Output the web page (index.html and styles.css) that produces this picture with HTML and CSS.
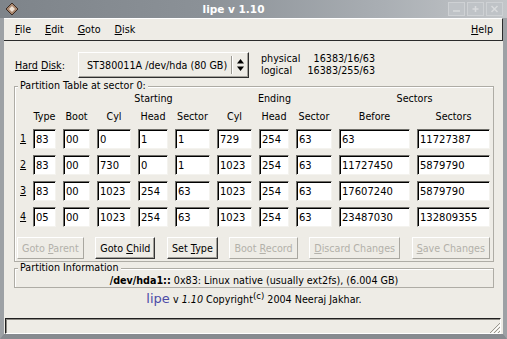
FILE: index.html
```html
<!DOCTYPE html>
<html lang="en">
<head>
    <meta charset="UTF-8">
    <meta name="viewport" content="width=device-width, initial-scale=1.0">
    <title>lipe v 1.10</title>
    <link rel="stylesheet" href="styles.css">
</head>
<body>
<div class="window">
    <div class="titlebar">
        <svg class="app-icon" width="14" height="14" viewBox="0 0 14 14">
            <path d="M7 1 L13 7 L7 13 L1 7 Z" fill="#a8866e" stroke="#3b2b22" stroke-width="1"/>
            <path d="M7 4 L10 7 L7 10 L4 7 Z" fill="#efe2d4"/>
        </svg>
        <span class="title">lipe v 1.10</span>
        <div class="wm-buttons">
            <span class="wm-btn"><svg width="11" height="8" viewBox="0 0 11 8"><path d="M2 6 H9" stroke="#d9dbdd" stroke-width="1.5"/></svg></span>
            <span class="wm-btn"><svg width="11" height="8" viewBox="0 0 11 8"><path d="M5.5 1 V7 M2.5 4 H8.5" stroke="#d9dbdd" stroke-width="1.5"/></svg></span>
            <span class="wm-btn"><svg width="11" height="8" viewBox="0 0 11 8"><path d="M2.5 1 L8.5 7 M8.5 1 L2.5 7" stroke="#d9dbdd" stroke-width="1.5"/></svg></span>
        </div>
    </div>

    <div class="frame-body">
        <div class="menubar">
            <span class="menu"><u>F</u>ile</span>
            <span class="menu"><u>E</u>dit</span>
            <span class="menu"><u>G</u>oto</span>
            <span class="menu"><u>D</u>isk</span>
            <span class="menu help"><u>H</u>elp</span>
        </div>

        <div class="content">
            <div class="disk-row">
                <label class="disk-label"><u>Hard</u> <u>Disk</u>:</label>
                <div class="combo">
                    <span class="combo-text">ST380011A /dev/hda (80 GB)</span>
                    <span class="combo-sep"></span>
                    <svg class="spin" width="9" height="16" viewBox="0 0 9 16">
                        <path d="M4.5 2 L8 6.5 H1 Z" fill="#000"/>
                        <path d="M4.5 14 L8 9.5 H1 Z" fill="#000"/>
                    </svg>
                </div>
                <div class="geometry">
                    <span>physical</span><span class="num">16383/16/63</span>
                    <span>logical</span><span class="num">16383/255/63</span>
                </div>
            </div>

            <fieldset class="frame ptable">
                <legend>Partition Table at sector 0:</legend>
                <div class="grid">
                    <div class="group span3"></div>
                    <div class="group span3">Starting</div>
                    <div class="group span3">Ending</div>
                    <div class="group span2">Sectors</div>

                    <div></div>
                    <div class="hd">Type</div>
                    <div class="hd">Boot</div>
                    <div class="hd">Cyl</div>
                    <div class="hd">Head</div>
                    <div class="hd">Sector</div>
                    <div class="hd">Cyl</div>
                    <div class="hd">Head</div>
                    <div class="hd">Sector</div>
                    <div class="hd">Before</div>
                    <div class="hd">Sectors</div>

                    <div class="rownum"><u>1</u></div>
                    <input class="campo" type="text" value="83">
                    <input class="campo" type="text" value="00">
                    <input class="campo" type="text" value="0">
                    <input class="campo" type="text" value="1">
                    <input class="campo" type="text" value="1">
                    <input class="campo" type="text" value="729">
                    <input class="campo" type="text" value="254">
                    <input class="campo" type="text" value="63">
                    <input class="campo" type="text" value="63">
                    <input class="campo" type="text" value="11727387">

                    <div class="rownum"><u>2</u></div>
                    <input class="campo" type="text" value="83">
                    <input class="campo" type="text" value="00">
                    <input class="campo" type="text" value="730">
                    <input class="campo" type="text" value="0">
                    <input class="campo" type="text" value="1">
                    <input class="campo" type="text" value="1023">
                    <input class="campo" type="text" value="254">
                    <input class="campo" type="text" value="63">
                    <input class="campo" type="text" value="11727450">
                    <input class="campo" type="text" value="5879790">

                    <div class="rownum"><u>3</u></div>
                    <input class="campo" type="text" value="83">
                    <input class="campo" type="text" value="00">
                    <input class="campo" type="text" value="1023">
                    <input class="campo" type="text" value="254">
                    <input class="campo" type="text" value="63">
                    <input class="campo" type="text" value="1023">
                    <input class="campo" type="text" value="254">
                    <input class="campo" type="text" value="63">
                    <input class="campo" type="text" value="17607240">
                    <input class="campo" type="text" value="5879790">

                    <div class="rownum"><u>4</u></div>
                    <input class="campo" type="text" value="05">
                    <input class="campo" type="text" value="00">
                    <input class="campo" type="text" value="1023">
                    <input class="campo" type="text" value="254">
                    <input class="campo" type="text" value="63">
                    <input class="campo" type="text" value="1023">
                    <input class="campo" type="text" value="254">
                    <input class="campo" type="text" value="63">
                    <input class="campo" type="text" value="23487030">
                    <input class="campo" type="text" value="132809355">
                </div>

                <div class="actions">
                    <button class="btn" type="button" disabled>Goto <u>P</u>arent</button>
                    <button class="btn" type="button">Goto <u>C</u>hild</button>
                    <button class="btn" type="button">Set <u>T</u>ype</button>
                    <button class="btn" type="button" disabled>Boot <u>R</u>ecord</button>
                    <button class="btn" type="button" disabled><u>D</u>iscard Changes</button>
                    <button class="btn" type="button" disabled><u>S</u>ave Changes</button>
                </div>
            </fieldset>

            <fieldset class="frame pinfo">
                <legend>Partition Information</legend>
                <p class="info"><b>/dev/hda1::</b> 0x83: Linux native (usually ext2fs), (6.004 GB)</p>
            </fieldset>

            <p class="about"><span class="logo">lipe</span> v <i>1.10</i> Copyright<sup>(c)</sup> 2004 Neeraj Jakhar.</p>
        </div>

        <div class="statusbar">
            <svg class="grip" width="13" height="13" viewBox="0 0 13 13">
                <path d="M12 2 L2 12 M12 6 L6 12 M12 10 L10 12" stroke="#9a9890" stroke-width="1"/>
                <path d="M13 3 L3 13 M13 7 L7 13" stroke="#fff" stroke-width="1"/>
            </svg>
        </div>
    </div>
</div>
</body>
</html>
```

FILE: styles.css
```css
* {
    box-sizing: border-box;
}

body {
    margin: 0;
    font-family: "DejaVu Sans", sans-serif;
    font-size: 9.6px;
    color: #000;
    background: #9da1a5;
}

.window {
    width: 507px;
    height: 339px;
    display: flex;
    flex-direction: column;
    background: #eeece6;
}

/* title bar */
.titlebar {
    height: 18px;
    display: flex;
    align-items: center;
    padding: 0 4px 0 5px;
    background: linear-gradient(90deg, #7e848a 0%, #8b9197 40%, #a9aeb3 75%, #c3c6c9 100%);
}

.app-icon {
    flex: none;
}

.title {
    flex: 1;
    text-align: center;
    color: #fff;
    font-weight: bold;
    font-size: 10.5px;
}

.wm-buttons {
    display: flex;
    gap: 2px;
}

.wm-btn {
    width: 17px;
    height: 14px;
    display: flex;
    align-items: center;
    justify-content: center;
    border: 1px solid #ced1d4;
    background: #bfc3c7;
}

/* body frame */
.frame-body {
    flex: 1;
    display: flex;
    flex-direction: column;
    border-left: 4px solid #9da1a5;
    border-right: 4px solid #9da1a5;
    border-bottom: 5px solid #878b90;
    background: #eeece6;
}

.menubar {
    height: 23px;
    display: flex;
    align-items: center;
    padding: 0 2px 0 4px;
    border-top: 1px solid #fff;
    border-bottom: 1px solid #2b2b2b;
    border-right: 1px solid #2b2b2b;
}

.menu {
    padding: 0 7px;
}

.help {
    margin-left: auto;
}

.content {
    padding-left: 10px;
}

/* hard disk row */
.disk-row {
    display: flex;
    align-items: center;
    height: 26px;
    margin-top: 11px;
}

.disk-label {
    flex: 0 0 63px;
    margin-left: 1px;
}

.combo {
    width: 171px;
    height: 26px;
    display: flex;
    align-items: center;
    border: 1px solid;
    border-color: #fff #2e2e2e #2e2e2e #fff;
    box-shadow: inset -1px -1px 0 #a4a29b;
    font-size: 9.6px;
}

.combo-text {
    flex: 1;
    min-width: 0;
    padding-left: 8px;
    white-space: nowrap;
}

.combo-sep {
    flex: none;
    width: 2px;
    height: 18px;
    border-left: 1px solid #9c9a93;
    border-right: 1px solid #fff;
}

.spin {
    flex: none;
    margin: 0 3px 0 3px;
}

.geometry {
    display: grid;
    grid-template-columns: 40px 74px;
    line-height: 12px;
    margin-left: 12px;
}

.num {
    text-align: right;
}

/* frames */
.frame {
    margin: 0;
    width: 480px;
    border: 1px solid #aeaca5;
    box-shadow: inset 1px 1px 0 #fff;
}

.frame legend {
    padding: 0 2px;
    margin-left: 1px;
    line-height: 12px;
    background: #eeece6;
}

.ptable {
    margin-top: 2px;
    padding: 1px 3px 2px 2px;
}

.grid {
    display: grid;
    grid-template-columns: 7px 23px 27px 34px 30px 35px 35px 30px 36px 71px 73px;
    grid-template-rows: 12px 12px repeat(4, 20px);
    column-gap: 7px;
    row-gap: 6px;
    margin-left: 2px;
    line-height: 12px;
}

.group {
    text-align: center;
}

.span3 {
    grid-column: span 3;
}

.span2 {
    grid-column: span 2;
}

.hd {
    text-align: center;
}

.rownum {
    line-height: 20px;
    padding-left: 1px;
}

.campo {
    width: 100%;
    height: 20px;
    margin: 0;
    padding: 0 2px;
    font-family: "DejaVu Sans", sans-serif;
    font-size: 10px;
    color: #000;
    background: #fff;
    border: 1px solid;
    border-color: #6f6e69 #f4f3ef #f4f3ef #6f6e69;
    box-shadow: inset 1px 1px 0 #000;
    outline: none;
}

.actions {
    display: flex;
    justify-content: space-between;
    margin-top: 10px;
}

.btn {
    height: 22px;
    padding: 0 4px;
    font-family: "DejaVu Sans", sans-serif;
    font-size: 9.6px;
    color: #000;
    background: #eeece6;
    border: 1px solid;
    border-color: #fff #353535 #353535 #fff;
    box-shadow: inset -1px -1px 0 #a3a19a;
}

.btn:disabled {
    color: #b3b1aa;
    border-color: #fff #a9a7a0 #a9a7a0 #fff;
    box-shadow: none;
}

.pinfo {
    padding: 1px 2px 0 2px;
}

.info {
    margin: 0;
    text-align: center;
    line-height: 12px;
}

.about {
    width: 480px;
    margin: 5px 0 0 0;
    text-align: center;
    line-height: 12px;
}

.logo {
    font-size: 13px;
    color: #4b4ba6;
}

.about i {
    font-size: 9.6px;
}

.about sup {
    font-size: 8.5px;
    vertical-align: 4px;
    line-height: 0;
}

/* status bar */
.statusbar {
    margin: auto 2px 0 1px;
    height: 16px;
    display: flex;
    justify-content: flex-end;
    align-items: flex-end;
    border: 1px solid;
    border-color: #1f1f1f #fff #fff #1f1f1f;
    box-shadow: inset 1px 1px 0 #8c8a84;
}

.grip {
    margin: 0 -1px -1px 0;
}
```
